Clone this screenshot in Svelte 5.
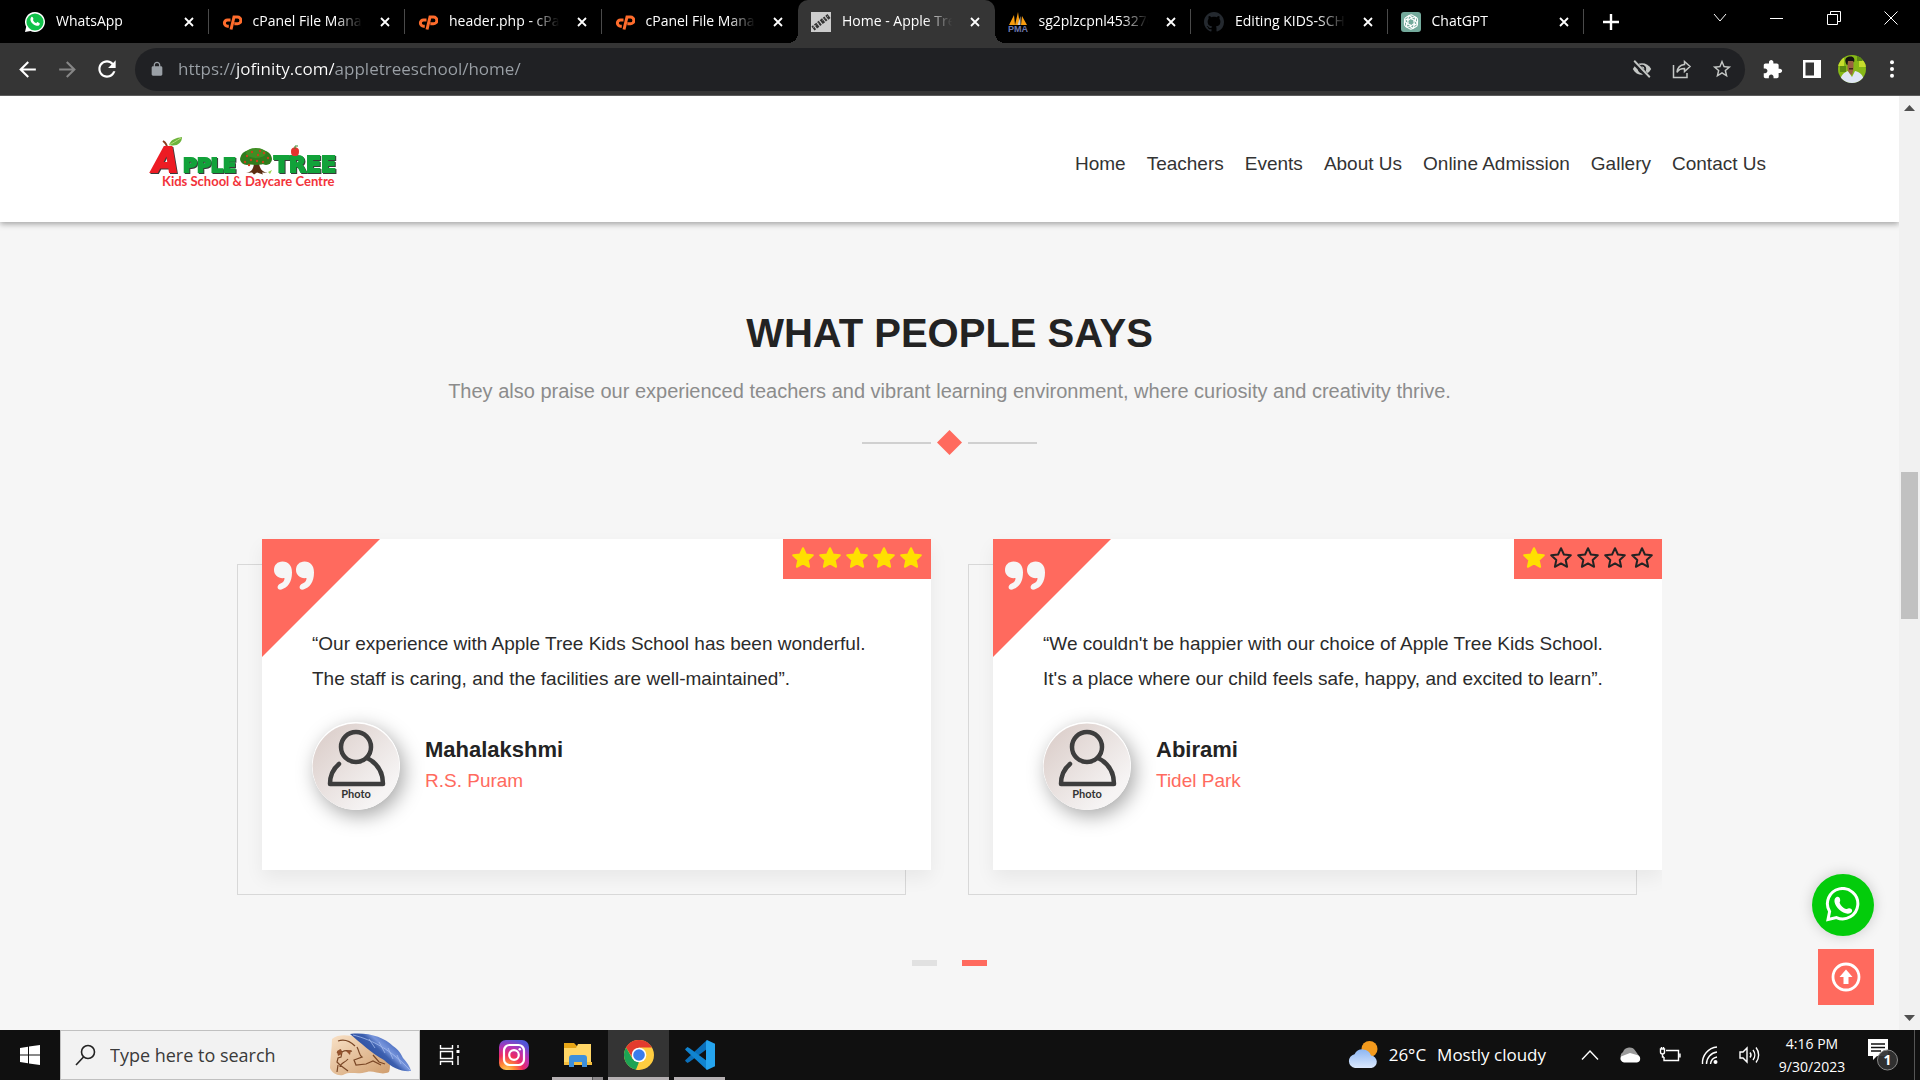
<script>
  const tabs = [
    { title: 'WhatsApp', icon: 'whatsapp' },
    { title: 'cPanel File Manager v3', icon: 'cpanel' },
    { title: 'header.php - cPanel', icon: 'cpanel' },
    { title: 'cPanel File Manager v3', icon: 'cpanel' },
    { title: 'Home - Apple Tree', icon: 'thumb', active: true },
    { title: 'sg2plzcpnl453276', icon: 'pma' },
    { title: 'Editing KIDS-SCHOOL', icon: 'github' },
    { title: 'ChatGPT', icon: 'chatgpt' }
  ];

  const links = ['Home', 'Teachers', 'Events', 'About Us', 'Online Admission', 'Gallery', 'Contact Us'];

  const reviews = [
    {
      lines: ['“Our experience with Apple Tree Kids School has been wonderful.', 'The staff is caring, and the facilities are well-maintained”.'],
      name: 'Mahalakshmi',
      place: 'R.S. Puram',
      rating: 5
    },
    {
      lines: ["“We couldn't be happier with our choice of Apple Tree Kids School.", "It's a place where our child feels safe, happy, and excited to learn”."],
      name: 'Abirami',
      place: 'Tidel Park',
      rating: 1
    }
  ];

  const starPath = 'M12 2.2l2.9 6.3 6.9.8-5.1 4.7 1.4 6.8-6.1-3.4-6.1 3.4 1.4-6.8-5.1-4.7 6.9-.8z';
  const apples = [[8, 9], [13, 5], [19, 8], [25, 6], [29, 11], [6, 15], [12, 13], [18, 14], [24, 15], [10, 18], [21, 4]];
  let url = $state('https://jofinity.com/appletreeschool/home/');
  let query = $state('');
</script>

<div class="screen">
  <header class="tabstrip">
    <div class="tabs">
      {#each tabs as tab}
        <div class="tab" class:active={tab.active}>
          {#if tab.icon === 'whatsapp'}
            <svg class="fav" viewBox="0 0 20 20"><path d="M10 0a10 10 0 1 1-4.6 18.9L0 20l1.200-5.200A10 10 0 0 1 10 0z" fill="#fff" /><circle cx="10" cy="10" r="8.600" fill="#10c24a" /><path d="M6.200 5.200c1-.8 1.500-.3 2.300 1.800-.6 1-.7 1 .2 2.200.8 1 1.400 1.500 2.500 2 .9-.9 1-1.300 1.600-1 1.700.8 2.200 1 2 1.700-.5 1.800-2 2.300-4 1.700C7.500 12.500 3.800 8.200 6.200 5.200z" fill="#fff" /></svg>
          {:else if tab.icon === 'cpanel'}
            <svg class="fav" viewBox="0 0 20 20" fill="none" stroke="#ff6c2c" stroke-width="3"><path d="M8.500 8H5.500a3 3 0 0 0 0 6.200h1.300M9 17.500L12 5h3.500a2.900 2.900 0 0 1 0 6.800h-3.200" /></svg>
          {:else if tab.icon === 'thumb'}
            <svg class="fav" viewBox="0 0 20 20"><path d="M0 0h20v20H0z" fill="#ccc" /><path d="M2 16.500L18 4" stroke="#333" stroke-width="5" stroke-dasharray="2 1.200 3 1" /><path d="M2 15.500L17 4" stroke="#bbb" stroke-width="1" stroke-dasharray="1 2" /></svg>
          {:else if tab.icon === 'pma'}
            <svg class="fav" viewBox="0 0 20 20"><path d="M1 13L6 3l1 10zM7 13l3-13 2 13zM13 13l1-9 5 9z" fill="#f89c0e" /><path d="M12.500 13V4l-3 9z" fill="#c9c9c9" /><text x="0" y="19.500" class="pma">PMA</text></svg>
          {:else if tab.icon === 'github'}
            <svg class="fav" viewBox="0 0 16 16"><path fill="#24292f" d="M8 0C3.580 0 0 3.580 0 8c0 3.540 2.290 6.530 5.470 7.590.4.070.55-.17.55-.38 0-.19-.01-.82-.01-1.490-2.010.37-2.530-.49-2.690-.94-.09-.23-.48-.94-.82-1.130-.28-.15-.68-.52-.01-.53.63-.01 1.080.58 1.230.82.72 1.210 1.870.87 2.330.66.07-.52.28-.87.51-1.070-1.780-.2-3.640-.89-3.640-3.950 0-.87.31-1.590.82-2.150-.08-.2-.36-1.020.08-2.120 0 0 .67-.21 2.200.82.64-.18 1.320-.27 2-.27s1.360.09 2 .27c1.530-1.040 2.200-.82 2.200-.82.44 1.100.16 1.920.08 2.120.51.56.82 1.270.82 2.150 0 3.070-1.870 3.750-3.650 3.950.29.25.54.73.54 1.480 0 1.070-.01 1.930-.01 2.200 0 .21.15.46.55.38A8 8 0 0 0 16 8c0-4.420-3.580-8-8-8z" /></svg>
          {:else}
            <svg class="fav" viewBox="0 0 20 20"><rect width="20" height="20" rx="3" fill="#74aa9c" /><g fill="none" stroke="#fff" stroke-width="1.100">{#each [0, 60, 120, 180, 240, 300] as a}<path d="M7.200 8.400V5.600a2.900 2.900 0 0 1 4.500-2.200l2.700 1.700v3.300L10 6.800" transform={`rotate(${a} 10 10)`} />{/each}</g></svg>
          {/if}
          <span class="tab-title">{tab.title}</span>
          <button class="close" aria-label="Close tab"><svg viewBox="0 0 10 10"><path d="M1 1l8 8M9 1L1 9" stroke="#fff" stroke-width="1.800" /></svg></button>
        </div>
      {/each}
    </div>
    <button class="newtab" aria-label="New tab"><svg width="16" height="16" viewBox="0 0 16 16"><path d="M8 0v16M0 8h16" stroke="#fff" stroke-width="2.400" /></svg></button>
    <div class="winbtns">
      <button aria-label="Search tabs"><svg width="14" height="14" viewBox="0 0 14 14"><path d="M1 3l6 7 6-7" /></svg></button>
      <button aria-label="Minimize"><svg width="14" height="14" viewBox="0 0 14 14"><path d="M0 7.500h13" /></svg></button>
      <button aria-label="Restore"><svg width="14" height="14" viewBox="0 0 14 14"><path d="M.5 3.500h10v10H.5zM3.500 3V.5h10v10H11" /></svg></button>
      <button aria-label="Close"><svg width="14" height="14" viewBox="0 0 14 14"><path d="M.5.5l13 13M13.500.5l-13 13" /></svg></button>
    </div>
  </header>

  <div class="toolbar">
    <button class="tool" aria-label="Back"><svg width="25" height="25" viewBox="0 0 24 24" fill="#fff"><path d="M20 11H7.830l5.590-5.590L12 4l-8 8 8 8 1.410-1.410L7.830 13H20v-2z" /></svg></button>
    <button class="tool" aria-label="Forward"><svg width="25" height="25" viewBox="0 0 24 24" fill="#868686"><path d="M4 11h12.170l-5.590-5.590L12 4l8 8-8 8-1.410-1.410L16.170 13H4v-2z" /></svg></button>
    <button class="tool" aria-label="Reload"><svg width="26" height="26" viewBox="0 0 24 24" fill="#fff"><path d="M17.650 6.350C16.200 4.900 14.210 4 12 4c-4.420 0-7.990 3.580-7.990 8s3.570 8 7.990 8c3.730 0 6.840-2.550 7.730-6h-2.080c-.82 2.330-3.040 4-5.650 4-3.310 0-6-2.690-6-6s2.690-6 6-6c1.660 0 3.140.69 4.220 1.780L13 11h7V4l-2.350 2.350z" /></svg></button>
    <div class="address">
      <svg width="16" height="16" viewBox="0 0 24 24" fill="#9aa0a6"><path fill-rule="evenodd" d="M18 8h-1V6c0-2.760-2.240-5-5-5S7 3.240 7 6v2H6c-1.100 0-2 .9-2 2v10c0 1.100.9 2 2 2h12c1.100 0 2-.9 2-2V10c0-1.100-.9-2-2-2zm-2.900 0H8.900V6c0-1.710 1.390-3.100 3.100-3.100s3.100 1.390 3.100 3.100v2z" /></svg>
      <input class="url" type="text" aria-label="Address" bind:value={url} />
      <button class="tool" aria-label="Third-party cookies blocked"><svg width="22" height="22" viewBox="0 0 24 24"><path d="M2 12c4-8.500 16-8.500 20 0-4 8.500-16 8.500-20 0z" fill="#c4c7c5" /><circle cx="12" cy="12" r="3.600" fill="none" stroke="#202124" stroke-width="2" /><path d="M2.500 4l17 17.500" stroke="#202124" stroke-width="5" /><path d="M3.500 3l17 18" stroke="#c4c7c5" stroke-width="2" /></svg></button>
      <button class="tool" aria-label="Share"><svg width="20" height="20" viewBox="0 0 20 20" fill="none" stroke="#c4c7c5" stroke-width="1.500"><path d="M1.500 6v12.500H15V14" /><path d="M12.500 2.500l5.500 5-5.500 5v-3c-3.500 0-6 1.200-7.500 3.800.4-4.800 3-7.300 7.500-7.800z" /></svg></button>
      <button class="tool" aria-label="Bookmark"><svg width="22" height="22" viewBox="0 0 24 24" fill="#c4c7c5"><path d="M22 9.240l-7.190-.62L12 2 9.190 8.630 2 9.240l5.460 4.730L5.820 21 12 17.270 18.180 21l-1.630-7.030L22 9.240zM12 15.400l-3.760 2.270 1-4.280-3.320-2.880 4.380-.38L12 6.100l1.710 4.040 4.380.38-3.320 2.880 1 4.280L12 15.400z" /></svg></button>
    </div>
    <button class="tool" aria-label="Extensions"><svg width="21" height="21" viewBox="0 0 24 24" fill="#fff"><path d="M20.500 11H19V7c0-1.100-.9-2-2-2h-4V3.500C13 2.120 11.880 1 10.500 1S8 2.120 8 3.500V5H4c-1.100 0-1.990.9-1.990 2v3.800H3.500c1.490 0 2.700 1.210 2.700 2.700s-1.210 2.700-2.700 2.700H2V20c0 1.100.9 2 2 2h3.800v-1.500c0-1.490 1.210-2.700 2.700-2.700 1.490 0 2.700 1.210 2.700 2.700V22H17c1.100 0 2-.9 2-2v-4h1.500c1.380 0 2.500-1.120 2.500-2.500S21.880 11 20.500 11z" /></svg></button>
    <button class="tool" aria-label="Side panel"><svg width="18" height="18" viewBox="0 0 18 18"><path fill="#fff" fill-rule="evenodd" d="M0 0h18v18H0zM2.500 2.500v13H11v-13z" /></svg></button>
    <button class="tool" aria-label="Profile">
      <svg width="28" height="28" viewBox="0 0 28 28">
        <defs><clipPath id="avatar"><circle cx="14" cy="14" r="14" /></clipPath></defs>
        <g clip-path="url(#avatar)">
          <path d="M0 0h28v28H0z" fill="#86b817" />
          <path d="M0 3h6v8H0zM21 6h7v6h-7z" fill="#c6dd2d" /><path d="M2 11h6v6H2zM19 1h5v5h-5z" fill="#5b8a12" />
          <path d="M2 28c0-7 3-10 8-12l4 6 3-6c5 1 9 4 9 12z" fill="#dfe6f5" />
          <path d="M9.500 6h6v7c0 3-1 4-1.500 7-2.500-1-4.500-4-4.500-7z" fill="#9a6042" />
          <path d="M7.500 7c-1-4 2-5.500 5-5.500 3.500 0 4.500 2.500 3.500 6l-1-1.500h-5L9.500 10c-1 0-1.500-1-2-3z" fill="#161311" />
          <path d="M11 13h4v1.500h-4z" fill="#3c231a" />
        </g>
      </svg>
    </button>
    <button class="tool" aria-label="Menu"><svg width="6" height="18" viewBox="0 0 6 18" fill="#fff"><circle cx="3" cy="2.200" r="2" /><circle cx="3" cy="9" r="2" /><circle cx="3" cy="15.800" r="2" /></svg></button>
  </div>

  <div class="viewport">
    <main class="page">
      <div class="siteheader">
        <a href="#home" class="logo" aria-label="Apple Tree home">
          <svg width="200" height="56" viewBox="0 0 200 56">
            <path d="M18 12c0-3-1-5-4-7" stroke="#8b3d1f" stroke-width="2" fill="none" />
            <path d="M20 9c2-6 7-7 13-8 0 6-5 10-13 8z" fill="#6cb33c" />
            <path d="M20 9c4-2 7-4 12-7" stroke="#b6dc7a" fill="none" />
            <g class="ink">
              <text x="4" y="36" class="biga">A</text>
              <text x="34" y="36" class="green small">PPLE</text>
              <text x="125" y="36" class="green">TREE</text>
            </g>
            <path d="M142 15c0-5 8-5 8 0s-2 5-4 5-4 0-4-5z" fill="#e5322d" /><path d="M146 13v-3h3" stroke="#3c8a2e" fill="none" />
            <g transform="translate(90 11)">
              <path d="M7 26c6-1 8-5 8-11h5c0 6 3 10 9 11l-6-.5 1 2-6-2-3 2-2-2z" fill="#5b2d12" />
              <ellipse cx="17" cy="10" rx="15" ry="8" fill="#2f7d1d" /><ellipse cx="8" cy="12" rx="7" ry="6" fill="#2f7d1d" /><ellipse cx="27" cy="12" rx="6" ry="6" fill="#2f7d1d" /><ellipse cx="17" cy="6" rx="10" ry="5" fill="#3f8f24" />
              {#each apples as [x, y]}<circle cx={x} cy={y} r="1.200" fill="#c2451c" />{/each}
              <path d="M29 25l4-2-2 4z" fill="#9ad04c" />
            </g>
            <text x="13" y="50" class="tagline">Kids School &amp; Daycare Centre</text>
          </svg>
        </a>
        <nav>
          {#each links as link}<a href="#section">{link}</a>{/each}
        </nav>
      </div>

      <section class="testimonials">
        <h2>WHAT PEOPLE SAYS</h2>
        <p class="sub">They also praise our experienced teachers and vibrant learning environment, where curiosity and creativity thrive.</p>
        <div class="divider"><span class="rule"></span><svg width="25" height="25" viewBox="0 0 26 26"><path d="M13 0l13 13-13 13L0 13z" fill="#ff6a5e" /></svg><span class="rule"></span></div>

        <div class="slides">
          {#each reviews as r}
            <article class="slide">
              <div class="card">
                <svg class="corner" width="118" height="118" viewBox="0 0 118 118">
                  <path d="M0 0h118L0 118z" fill="#ff6a5e" />
                  <path d="M20.500 22.500c6 0 9.500 4 9.500 11 0 10-4.500 15-10.500 17-4.500 1-5.500-4-1-6 3-1 4-3 4-5.500-6 1-10.500-3-10.500-8s3.500-8.500 8.500-8.500zM42.500 22.500c6 0 9.500 4 9.500 11 0 10-4.500 15-10.500 17-4.500 1-5.500-4-1-6 3-1 4-3 4-5.500-6 1-10.500-3-10.500-8s3.500-8.500 8.500-8.500z" fill="#f6f6f6" />
                </svg>
                <div class="rating" role="img" aria-label={`${r.rating} out of 5 stars`}>
                  {#each [1, 2, 3, 4, 5] as n}
                    <svg width="24" height="24" viewBox="0 0 24 24" class:on={n <= r.rating}><path d={starPath} /></svg>
                  {/each}
                </div>
                <p class="quote">{r.lines[0]}<br />{r.lines[1]}</p>
                <div class="person">
                  <svg class="photo" width="88" height="88" viewBox="0 0 88 88">
                    <defs><linearGradient id="shade" x1="0" y1="0" x2="1" y2="1"><stop offset="0.1" stop-color="#dccfcb" /><stop offset="0.8" stop-color="#f6f4f4" /></linearGradient></defs>
                    <circle cx="44" cy="44" r="44" fill="#fff" />
                    <circle cx="44" cy="45" r="43.500" fill="url(#shade)" />
                    <g fill="none" stroke="#3d3d3d" stroke-width="4.500" stroke-linecap="round" stroke-linejoin="round"><circle cx="44" cy="25" r="15" /><path d="M27 42c-6 5-9 12-9 20h53c0-12-6-21-16-26" /></g>
                    <text x="44" y="76" text-anchor="middle" class="phototext">Photo</text>
                  </svg>
                  <div class="who">
                    <h3>{r.name}</h3>
                    <p class="place">{r.place}</p>
                  </div>
                </div>
              </div>
            </article>
          {/each}
        </div>
        <div class="dots"><button aria-label="Slide 1"></button><button class="current" aria-label="Slide 2"></button></div>
      </section>

      <div class="floating">
        <a href="#chat" class="chat" aria-label="Chat on WhatsApp"><svg width="36" height="36" viewBox="0 0 36 36"><path fill="none" stroke="#fff" stroke-width="3" d="M11.500 30.600A15.200 15.200 0 1 0 4.600 24.500L3 32.500z" /><path fill="#fff" d="M10 11.500c2-3 5-1.600 5.200 1.500.1 1.500-.7 2-.5 3 .8 3 4 5.300 6.300 6 1 .2 1.600-.9 3.200-.8 3 .2 4 2.800 1.600 4.600-3 2-8 .4-11.500-3-4-4-5.800-8.500-4.300-11.300z" /></svg></a>
        <a href="#top" class="totop" aria-label="Back to top"><svg width="30" height="30" viewBox="0 0 30 30"><circle cx="15" cy="15" r="13" fill="none" stroke="#fff" stroke-width="2.800" /><path d="M15 7.500l6.500 7.500h-4v7h-5v-7h-4z" fill="#fff" /></svg></a>
      </div>
    </main>
    <div class="scrollbar">
      <svg width="11" height="6" viewBox="0 0 11 6"><path d="M0 6l5.500-6L11 6z" fill="#505050" /></svg>
      <div class="track"><div class="thumb"></div></div>
      <svg width="11" height="6" viewBox="0 0 11 6"><path d="M0 0l5.500 6L11 0z" fill="#505050" /></svg>
    </div>
  </div>

  <footer class="taskbar">
    <button class="start" aria-label="Start"><svg width="20" height="20" viewBox="0 0 20 20" fill="#fff"><path d="M0 3l8-1.200v7.700H0zM9 1.600L20 0v9.500H9zM0 10.500h8v7.700L0 17zM9 10.500h11V20L9 18.400z" /></svg></button>
    <label class="search">
      <svg width="22" height="22" viewBox="0 0 22 22" fill="none" stroke="#222" stroke-width="1.600"><circle cx="13" cy="8" r="6.500" /><path d="M8.500 13L1 21" /></svg>
      <input type="text" placeholder="Type here to search" aria-label="Search" bind:value={query} />
      <svg width="84" height="44" viewBox="0 0 84 44">
        <defs><linearGradient id="paper" x1="0" y1="0" x2="1" y2="1"><stop offset="0" stop-color="#f9e2c8" /><stop offset="1" stop-color="#cf9c6b" /></linearGradient><linearGradient id="quill" x1="0.2" y1="0.6" x2="0.8" y2="0.2"><stop offset="0" stop-color="#27499c" /><stop offset="0.45" stop-color="#3c5fae" /><stop offset="0.6" stop-color="#7795dc" /><stop offset="1" stop-color="#3358b0" /></linearGradient></defs>
        <path d="M3 6c6-5 16-4 24-2 12 1 22 6 30 16 4 6 5 13 3 19-8 4-15-2-22 0-10 3-17-1-24 3-6 1-11-2-13-7 0-9 2-20 2-29z" fill="url(#paper)" />
        <path d="M8 20l3-3 2 2-1 5-3 1-1 4 3 3M13 19c5-3 7 0 10-1M9 32l-1 7M11 32l8 6M19 26c-3 4-8 4-8 8M28 14c3 6 2 8 5 10l-8 3 2 5 10-1 7-3 8 4M44 22l6 7 6 2M9 8c6-2 12 0 17 5" fill="none" stroke="#7a4726" stroke-width="1.200" />
        <path d="M8 18l4-2 1 5-4 2zM17 18l5-1-1 5z" fill="#94532e" />
        <path d="M21 1c18-2 34 3 43 12 6 4 8 8 10 12 4 4 7 9 8 13-9 1-19-3-27-11C42 20 32 10 21 1z" fill="url(#quill)" />
        <path d="M24 2c20 5 38 15 57 35M40 6l6 9M50 9l6 11M59 15l5 11M68 22l4 9" fill="none" stroke="#a5bbee" stroke-width="0.800" />
      </svg>
    </label>
    <button class="app taskview" aria-label="Task view"><svg width="22" height="22" viewBox="0 0 22 22" fill="none" stroke="#fff" stroke-width="1.400"><path d="M1.500 1v3.500h12V1M1.500 21v-3.500h12V21M1.500 7.500h12v7h-12zM19 1v3M19 12v9" /><path d="M17.500 6h3v3h-3z" fill="#fff" stroke="none" /></svg></button>
    <button class="app insta" aria-label="Instagram"><svg width="30" height="30" viewBox="0 0 30 30"><defs><radialGradient id="insta" cx="0.25" cy="1.05" r="1.1"><stop offset="0" stop-color="#ffd65c" /><stop offset="0.25" stop-color="#ff8a35" /><stop offset="0.5" stop-color="#ee2a63" /><stop offset="0.75" stop-color="#b532b5" /><stop offset="1" stop-color="#5156d6" /></radialGradient></defs><rect width="30" height="30" rx="7" fill="url(#insta)" /><rect x="5" y="5" width="20" height="20" rx="5.500" fill="none" stroke="#fff" stroke-width="2.200" /><circle cx="15" cy="15" r="4.800" fill="none" stroke="#fff" stroke-width="2.200" /><circle cx="20.800" cy="9.200" r="1.300" fill="#fff" /></svg></button>
    <button class="app open stacked" aria-label="File Explorer"><svg width="30" height="26" viewBox="0 0 30 26"><path d="M1 1h10l3 3h14v19H1z" fill="#e7a516" /><path d="M1 6h12l2-4h13v21H1z" fill="#ffd666" /><path d="M1 20h28v3H1z" fill="#f4bd3d" /><path d="M6 25V16c0-2 1-3 3-3h12c2 0 3 1 3 3v9h-5v-5h-8v5z" fill="#3d8fdb" /></svg></button>
    <button class="app open current" aria-label="Chrome"><svg width="30" height="30" viewBox="0 0 30 30"><circle cx="15" cy="15" r="15" fill="#ffcd40" /><path d="M2 7.500A15 15 0 0 1 28 7.500H15L9 18.500z" fill="#e33b2e" /><path d="M2 7.500l6.500 11.300L15 22l-3 7.700A15 15 0 0 1 2 7.500z" fill="#1da354" /><path d="M15 30a15 15 0 0 1-3-.3l6.800-10.500 2.500.2z" fill="#ffcd40" /><circle cx="15" cy="15" r="7.300" fill="#fff" /><circle cx="15" cy="15" r="5.800" fill="#3a7cec" /></svg></button>
    <button class="app open" aria-label="Visual Studio Code"><svg width="30" height="30" viewBox="0 0 30 30"><path d="M22 0v9L5 21.500 2.500 23 0 20.800l1-1.300z" fill="#0a6fba" /><path d="M22 30v-9L5 8.500 2.500 7 0 9.200l1 1.300z" fill="#1084d0" /><path d="M22 0l8 3.800v22.400L22 30l-1-1.500v-27z" fill="#25a4ee" /></svg></button>

    <div class="tray">
      <button class="weather">
        <svg width="30" height="28" viewBox="0 0 30 28"><defs><linearGradient id="cloud" x1="0" y1="0" x2="0" y2="1"><stop offset="0" stop-color="#8db6f2" /><stop offset="1" stop-color="#dbe8fd" /></linearGradient></defs><circle cx="21.500" cy="8" r="8" fill="#f39a1d" /><path d="M7 27a7 7 0 0 1-.5-13.800A9 9 0 0 1 23 14.500 6.300 6.300 0 0 1 23.500 27z" fill="url(#cloud)" /></svg>
        <span>26°C</span><span>Mostly cloudy</span>
      </button>
      <button class="ticon" aria-label="Hidden icons"><svg width="18" height="12" viewBox="0 0 18 12"><path d="M1 10.500L9 2l8 8.500" /></svg></button>
      <button class="ticon" aria-label="OneDrive"><svg width="22" height="16" viewBox="0 0 22 16"><path stroke="none" fill="#9b9b9b" d="M4 13a4.500 4.500 0 0 1 0-8 7 7 0 0 1 12.500-1L20 9z" /><path stroke="none" fill="#fff" d="M5 15.500a4 4 0 0 1-3-6L11 6l7 2a3.800 3.800 0 0 1 0 7.500z" /></svg></button>
      <button class="ticon" aria-label="Battery"><svg width="22" height="18" viewBox="0 0 22 18"><path d="M7 4.500h12.500v10H5V11M21 7.500v4M1.500 3v3a2 2 0 0 0 4 0V3zM2.500 3V1M4.500 3V1M3.500 8v3H5" /></svg></button>
      <button class="ticon" aria-label="Network"><svg width="18" height="20" viewBox="0 0 18 20"><path d="M1.500 19A16 16 0 0 1 16 2M5.500 19A12 12 0 0 1 16 7M9.500 19A8 8 0 0 1 16 12" /><circle cx="14.500" cy="17" r="2" fill="#fff" stroke="none" /></svg></button>
      <button class="ticon" aria-label="Volume"><svg width="22" height="18" viewBox="0 0 22 18"><path d="M1 6h3l4-4v14l-4-4H1zM11 6.500a4 4 0 0 1 0 5M14 4a8 8 0 0 1 0 10M17 1.500a12 12 0 0 1 0 15" /></svg></button>
      <div class="clock"><span>4:16 PM</span><span>9/30/2023</span></div>
      <button class="notes" aria-label="Notifications"><svg width="32" height="34" viewBox="0 0 32 34"><path d="M1 1h20v17H10l-4 4v-4H1z" fill="#fff" /><path d="M4 6h14M4 9.500h14M4 13h10" stroke="#101010" stroke-width="1.300" /><circle cx="20.500" cy="22" r="10" fill="#333" fill-opacity="0.95" stroke="#888" /><text x="20.500" y="27" text-anchor="middle" class="count">1</text></svg></button>
    </div>
  </footer>
</div>

<style>
  :global(body) { margin: 0; background: #f6f6f6; }
  .screen { min-height: 100vh; display: flex; flex-direction: column; font-family: "Open Sans", "Noto Sans", sans-serif; }
  button { border: 0; background: none; padding: 0; margin: 0; color: inherit; font: inherit; }
  svg { display: block; flex: none; }
  a { text-decoration: none; }
  h2, h3, p { margin: 0; }

  .tabstrip { display: flex; height: 43px; padding-left: 12px; background: #000; color: #fff; }
  .tabs { display: flex; flex: 0 1 1572px; min-width: 0; }
  .tab { position: relative; flex: 1; min-width: 0; box-sizing: border-box; display: flex; align-items: center; gap: 10px; padding: 0 12px 0 13px; font-size: 14px; line-height: 20px; }
  .tab::after { content: ""; position: absolute; right: 0; top: 9px; width: 1px; height: 25px; background: #4a4a4a; }
  .tab:nth-child(4)::after, .tab.active::after { display: none; }
  .tab.active { background: #353535; border-radius: 10px 10px 0 0; }
  .tab.active::before { content: ""; position: absolute; left: -10px; right: -10px; bottom: 0; height: 10px; background: radial-gradient(circle at 0 0, transparent 10px, #353535 10px) left / 10px 10px no-repeat, radial-gradient(circle at 100% 0, transparent 10px, #353535 10px) right / 10px 10px no-repeat; }
  .fav { width: 20px; height: 20px; }
  .pma { font: 700 9px "Liberation Sans", sans-serif; fill: #6c78af; }
  .tab-title { flex: 1; padding: 0 0 2px 1px; overflow: hidden; white-space: nowrap; mask-image: linear-gradient(90deg, #000 72%, transparent 96%); }
  .close { width: 16px; height: 16px; display: grid; place-items: center; }
  .close svg { width: 10px; height: 10px; }
  .newtab { width: 54px; display: grid; place-items: center; }
  .winbtns { margin-left: auto; padding-right: 1px; display: flex; }
  .winbtns button { width: 57px; height: 36px; display: grid; place-items: center; }
  .winbtns path { fill: none; stroke: #fff; stroke-width: 1; }

  .toolbar { display: flex; align-items: center; height: 52px; padding: 0 8px 0 7px; background: #353535; border-bottom: 1px solid #5c5c5c; }
  .tool { width: 40px; height: 40px; display: grid; place-items: center; }
  .address { flex: 1; display: flex; align-items: center; height: 43px; box-sizing: border-box; margin: 0 7px 0 8px; padding: 0 3px 0 14px; border-radius: 22px; background: #202124; }
  .url { flex: 1; min-width: 0; margin-left: 13px; padding: 0; border: 0; outline: 0; font: 17px/24px "Open Sans", "Noto Sans", sans-serif; color: transparent; background: linear-gradient(90deg, #9aa0a6 58px, #fff 58px, #fff 156px, #9aa0a6 156px); background-clip: text; -webkit-background-clip: text; }

  .viewport { flex: 1; display: flex; background: #f6f6f6; }
  .page { flex: 1; min-width: 0; position: relative; font-family: "Liberation Sans", Arial, sans-serif; color: #2b2b2b; }
  .siteheader { position: relative; box-sizing: border-box; display: flex; justify-content: space-between; align-items: center; height: 126px; padding: 10px 133px 0 149px; background: #fff; box-shadow: 0 2px 6px rgba(0, 0, 0, 0.35); clip-path: inset(0 0 -12px 0); }
  .ink { filter: drop-shadow(1px 1px 0 #3a3a3a); }
  .biga { font: italic 700 33px "DejaVu Sans", sans-serif; fill: #ed1c24; stroke: #ed1c24; stroke-width: 2; }
  .green { font: 700 22px "DejaVu Sans", sans-serif; fill: #12a23a; stroke: #12a23a; stroke-width: 2; }
  .green.small { font-size: 19px; }
  .tagline { font: 700 13px "Lato", sans-serif; fill: #f2333a; }
  nav { display: flex; gap: 21px; font-size: 19px; line-height: 24px; }
  nav a { color: #333; white-space: nowrap; }

  .testimonials { padding: 87px 24px 60px; display: flex; flex-direction: column; align-items: center; }
  h2 { font-size: 40px; line-height: 48px; font-weight: 700; color: #232323; }
  .sub { margin-top: 19px; font-size: 20px; line-height: 30px; color: #8c8c8c; }
  .divider { margin-top: 24px; display: flex; align-items: center; gap: 6px; }
  .rule { width: 69px; height: 2px; background: #d0d0d0; }
  .slides { margin-top: 84px; width: 100%; max-width: 1425px; display: grid; grid-template-columns: 1fr 1fr; gap: 37px; overflow-x: clip; }
  .slide { position: relative; padding: 0 0 25px 25px; }
  .slide::before { content: ""; position: absolute; inset: 25px 25px 0 0; border: 1px solid #d8d8d8; }
  .card { position: relative; padding: 87px 50px 60px; background: #fff; box-shadow: 0 8px 18px rgba(0, 0, 0, 0.06); }
  .corner { position: absolute; left: 0; top: 0; }
  .rating { position: absolute; right: 0; top: 0; box-sizing: border-box; display: flex; align-items: center; gap: 3px; height: 40px; padding: 0 8px 2px; background: #ff6a5e; }
  .rating path { fill: none; stroke: #232323; stroke-width: 2; stroke-linejoin: round; }
  .rating .on path { fill: #ffe000; stroke: #ffe000; }
  .quote { position: relative; font-size: 19px; line-height: 35px; white-space: nowrap; }
  .person { margin-top: 26px; display: flex; align-items: center; gap: 25px; }
  .who { padding-bottom: 3px; }
  .photo { border-radius: 50%; box-shadow: 4px 6px 20px rgba(0, 0, 0, 0.35); }
  .phototext { font: 700 11px "Lato", sans-serif; fill: #333; }
  h3 { font-size: 22px; line-height: 31px; font-weight: 700; color: #232323; }
  .place { font-size: 19px; line-height: 31px; color: #ff6a5e; }
  .dots { margin-top: 65px; display: flex; gap: 25px; }
  .dots button { width: 25px; height: 6px; background: #e1e1e1; }
  .dots .current { background: #ff6a5e; }

  .floating { position: absolute; right: 25px; bottom: 25px; display: flex; flex-direction: column; align-items: flex-end; gap: 13px; }
  .chat { width: 62px; height: 62px; border-radius: 50%; background: #03cc0b; display: grid; place-items: center; box-shadow: 0 0 14px rgba(0, 0, 0, 0.18); }
  .totop { width: 56px; height: 56px; background: #ff6a5e; display: grid; place-items: center; }

  .scrollbar { width: 21px; flex: none; display: flex; flex-direction: column; align-items: center; padding: 9px 0; box-sizing: border-box; background: #f1f1f1; }
  .track { flex: 1; width: 17px; display: grid; grid-template-rows: 361fr 147fr 396fr; }
  .thumb { grid-row: 2; background: #c1c1c1; }

  .taskbar { display: flex; height: 50px; background: #101010; color: #fff; }
  .start { width: 60px; display: grid; place-items: center; }
  .search { width: 360px; box-sizing: border-box; display: flex; align-items: center; padding: 0 6px 0 14px; background: #f2f2f2; border: 1px solid #c0c0c0; }
  .search input { flex: 1; min-width: 0; margin-left: 13px; padding: 0; border: 0; outline: 0; background: none; font: 18px/24px "Open Sans", "Noto Sans", sans-serif; color: #2b2b2b; }
  .search input::placeholder { color: #3a3a3a; opacity: 1; }
  .app { position: relative; width: 61px; display: grid; place-items: center; }
  .taskview { width: 60px; }
  .insta { width: 67px; }
  .app.open::after { content: ""; position: absolute; left: 5px; right: 5px; bottom: 0; height: 3px; background: #b5b0b2; }
  .app.stacked::after { background: linear-gradient(90deg, #b5b0b2 40px, #555 40px, #555 41px, #8d898b 41px); }
  .app.current { background: #343434; }
  .app.current::after { left: 0; right: 0; }
  .tray { margin-left: auto; display: flex; align-items: center; padding-right: 3px; border-right: 1px solid #555; margin-right: 5px; }
  .weather { display: flex; align-items: center; gap: 11px; margin-right: 24px; font-size: 17px; line-height: 24px; white-space: nowrap; }
  .ticon { width: 40px; height: 48px; display: grid; place-items: center; }
  .ticon svg { fill: none; stroke: #fff; stroke-width: 1.400px; }
  .clock { width: 84px; display: flex; flex-direction: column; align-items: center; font-size: 14px; line-height: 23px; }
  .notes { width: 57px; display: grid; place-items: center; }
  .count { font: 700 14px "Open Sans", sans-serif; fill: #fff; }
</style>
